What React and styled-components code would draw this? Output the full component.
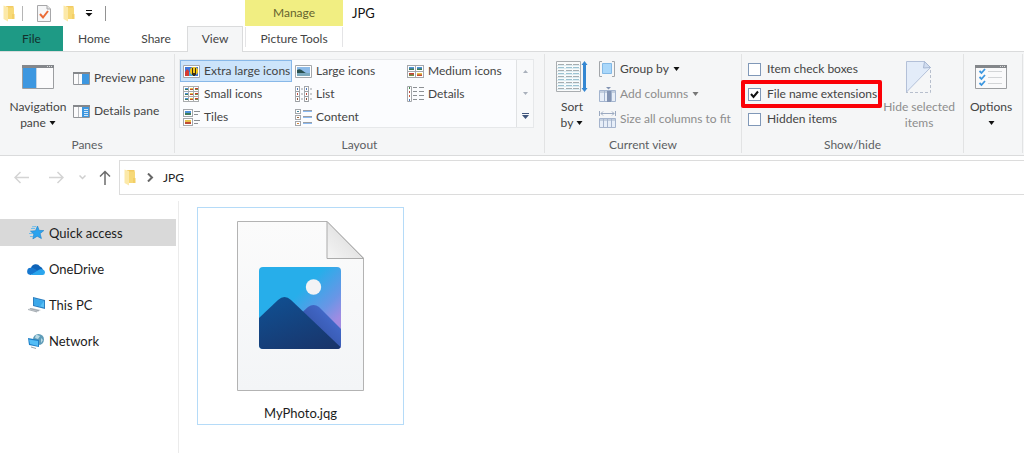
import React from "react";
import styled, { createGlobalStyle, css } from "styled-components";

const GlobalStyle = createGlobalStyle`
  *, *::before, *::after { box-sizing: border-box; }
  body {
    margin: 0;
    background: #fff;
    color: #444;
    font-family: Lato, "Open Sans", sans-serif;
    font-size: 12px;
    line-height: 16px;
  }
  button, input { font: inherit; color: inherit; margin: 0; }
  button { padding: 0; border: 0; background: none; white-space: nowrap; }
  svg { display: block; flex: none; }
`;

const Window = styled.div`
  display: flex;
  flex-direction: column;
  min-height: 100vh;
`;

const Header = styled.header`
  display: flex;
  align-items: stretch;
  height: 52px;
`;

const HeaderStart = styled.div`
  display: flex;
  flex-direction: column;
  width: 245px;
`;

const QuickBar = styled.div`
  display: flex;
  align-items: center;
  height: 26px;
  padding-left: 3px;
`;

const QuickButton = styled.button`
  display: flex;
  margin-right: ${(p) => p.$gap || 0}px;
`;

const Divider = styled.span`
  width: 1px;
  height: 15px;
  margin-right: ${(p) => p.$gap || 0}px;
  background: ${(p) => p.$color || "#b5b5b5"};
`;

const Tabs = styled.nav`
  display: flex;
  height: 26px;
  border-bottom: 1px solid #dadbdc;
`;

const Tab = styled.button`
  width: ${(p) => p.$width}px;
  height: 25px;
  ${(p) => p.$file && css`
    background: #1e9a85;
    color: #12312d;
  `}
  ${(p) => p.$active && css`
    height: 26px;
    padding-bottom: 1px;
    background: #f5f6f7;
    border: 1px solid #dadbdc;
    border-bottom: 0;
  `}
`;

const ContextTab = styled.div`
  display: flex;
  flex-direction: column;
  width: 98px;
  border-bottom: 1px solid #dadbdc;
`;

const ContextTitle = styled.div`
  height: 26px;
  line-height: 26px;
  text-align: center;
  background: #f1ee82;
  color: #66642f;
`;

const ContextButton = styled.button`
  height: 20px;
  margin-top: 1px;
  padding-top: 4px;
  border: 1px solid #e4e4e6;
  border-width: 0 1px;
`;

const Title = styled.h1`
  flex: 1;
  margin: 0;
  padding: 0 9px;
  border-bottom: 1px solid #dadbdc;
  color: #111;
  font-size: 13px;
  font-weight: 400;
  line-height: 26px;
`;

const Ribbon = styled.section`
  display: flex;
  height: 104px;
  padding: 2px 0;
  background: #f5f6f7;
  border-bottom: 1px solid #dadbdc;
`;

const Group = styled.section`
  display: flex;
  flex-direction: column;
  flex: none;
  width: ${(p) => p.$width}px;
  border-right: 1px solid #e2e3e4;
`;

const GroupBody = styled.div`
  display: flex;
  flex: 1;
  padding: ${(p) => p.$pad || "0"};
`;

const GroupName = styled.h2`
  margin: 0;
  height: 16px;
  color: #5c5f63;
  font-size: 12px;
  font-weight: 400;
  line-height: 16px;
  text-align: center;
`;

const BigButton = styled.button`
  display: flex;
  flex-direction: column;
  align-items: center;
  width: ${(p) => p.$width}px;
  height: 82px;
  color: ${(p) => (p.disabled ? "#8d8d8d" : "#444")};
`;

const BigArt = styled.span`
  display: flex;
  align-items: center;
  height: 40px;
  margin: 3px 0 2px;
`;

const Line = styled.span`
  display: flex;
  align-items: center;
  gap: 3px;
  min-height: 16px;
`;

const Stack = styled.div`
  display: flex;
  flex-direction: column;
  align-items: flex-start;
  gap: ${(p) => p.$gap}px;
  padding: ${(p) => p.$pad || "0"};
`;

const SmallButton = styled.button`
  display: flex;
  align-items: center;
  gap: 4px;
  height: 18px;
  color: ${(p) => (p.disabled ? "#8d8d8d" : "#444")};
`;

const Gallery = styled.div`
  display: flex;
  width: 355px;
  height: 69px;
  border: 1px solid #e6e8ea;
  background: #fbfcfe;
`;

const GalleryGrid = styled.div`
  display: grid;
  grid-template-columns: 112px 112px 112px;
  grid-auto-rows: 22px;
  row-gap: 1px;
  flex: 1;
`;

const GalleryItem = styled.button`
  display: flex;
  align-items: center;
  gap: 4px;
  padding-left: 2px;
  border: 1px solid transparent;
  ${(p) => p.$active && css`
    background: #cce4fb;
    border-color: #88b8e8;
  `}
`;

const Scroller = styled.div`
  display: flex;
  flex-direction: column;
  width: 17px;
  border-left: 1px solid #e0e2e4;
`;

const ScrollButton = styled.button`
  display: flex;
  flex: 1;
  align-items: center;
  justify-content: center;
  background: #f8f9fa;
`;

const CheckLabel = styled.label`
  position: relative;
  display: flex;
  align-items: center;
  gap: 6px;
  height: 18px;
  white-space: nowrap;
  ${(p) => p.$marked && css`
    &::after {
      content: "";
      position: absolute;
      inset: -5px -5px -5px -7px;
      border: 4px solid #fb0007;
      border-radius: 2px;
    }
  `}
`;

const CheckBox = styled.input`
  appearance: none;
  width: 13px;
  height: 13px;
  border: 1px solid #8098b8;
  background: #fff;
  &:checked {
    background: #fff url("data:image/svg+xml,%3Csvg xmlns='http://www.w3.org/2000/svg' viewBox='0 0 11 11'%3E%3Cpath d='M2 5l2.5 3L9 2.5' fill='none' stroke='%23111' stroke-width='2'/%3E%3C/svg%3E");
  }
`;

const AddressRow = styled.div`
  display: flex;
  align-items: center;
  height: 35px;
  margin-top: 4px;
`;

const NavButtons = styled.div`
  display: flex;
  align-items: center;
  width: 119px;
  padding-left: 14px;
`;

const NavButton = styled.button`
  margin-right: ${(p) => p.$gap || 0}px;
`;

const Address = styled.div`
  display: flex;
  flex: 1;
  align-items: center;
  gap: 9px;
  height: 35px;
  padding-left: 4px;
  border: 1px solid #dcdcdc;
  border-right: 0;
  color: #222;
`;

const Main = styled.main`
  display: flex;
  flex: 1;
  padding-top: 6px;
`;

const Sidebar = styled.nav`
  display: flex;
  flex-direction: column;
  gap: 9px;
  width: 179px;
  padding: 18px 2px 0 0;
  border-right: 1px solid #ebebeb;
`;

const Place = styled.a`
  display: flex;
  align-items: center;
  gap: 4px;
  height: 27px;
  padding-left: 27px;
  color: #1c1c1c;
  font-size: 13px;
  text-decoration: none;
  background: ${(p) => (p.$active ? "#d9d9d9" : "transparent")};
`;

const Files = styled.section`
  flex: 1;
  padding: 6px 18px;
`;

const FileTile = styled.button`
  display: flex;
  flex-direction: column;
  align-items: center;
  gap: 13px;
  width: 207px;
  height: 218px;
  padding-top: 13px;
  border: 1px solid #b5dbf8;
  color: #1c1c1c;
  font-size: 13px;
`;

const Caret = ({ color = "#111" }) => (
  <svg width="7" height="4" viewBox="0 0 7 4"><path d="M0.500 0h6L3.500 4z" fill={color} /></svg>
);

const Folder = () => (
  <svg width="12" height="17" viewBox="0 0 12 17">
    <path d="M3 1h7.500v13H3z" fill="#f2cb64" />
    <path d="M4.500 2.500H11V14H4.500z" fill="#f7d978" />
    <path d="M0.500 0.500L5 2v14.500L0.500 14z" fill="#fce9a9" />
    <path d="M9 9h2.500v5H9z" fill="#f3cf66" />
  </svg>
);

const PageCheck = () => (
  <svg width="14" height="17" viewBox="0 0 14 17">
    <path d="M.5.5h9.500l3.500 3.500v12.500H.5z" fill="#f7f7f8" stroke="#a7a7a9" />
    <path d="M10 .5v3.500h3.500" fill="#e4e4e4" stroke="#a7a7a9" />
    <path d="M3 9l3 3.500L11 6" fill="none" stroke="#ea6a35" strokeWidth="2" />
  </svg>
);

const Customize = () => (
  <svg width="8" height="7" viewBox="0 0 8 7"><path d="M1 0h6v1H1zM.5 3h7L4 6.500z" fill="#111" /></svg>
);

const NavPaneIcon = () => (
  <svg width="32" height="24" viewBox="0 0 32 24">
    <path d="M.5.5h31v23H.5z" fill="#fbfbfc" stroke="#9c9ea1" />
    <path d="M0 0h32v3H0z" fill="#84878b" />
    <path d="M25 1h1v1h-1zM27 1h1v1h-1zM29 1h1v1h-1z" fill="#d9dadb" />
    <path d="M1 3h13v20H1z" fill="#3d97e0" />
    <path d="M14 3h1v20h-1z" fill="#c4d4e4" />
  </svg>
);

const PaneIcon = ({ details }) => (
  <svg width="17" height="13" viewBox="0 0 17 13">
    <path d="M.5.5h16v12H.5z" fill="#fbfbfc" stroke="#929599" />
    <path d="M0 0h17v2H0z" fill="#84878b" />
    <path d="M5 2h1v10H5z" fill="#b9bcc0" />
    <path d="M9 2h7v10H9z" fill="#3d97e0" />
    {details && <path d="M11 4h4v1h-4zM11 6h4v1h-4zM11 8h4v1h-4zM11 10h4v1h-4z" fill="#cfe6f9" />}
  </svg>
);

const Thumb = ({ x = 0, y = 0, w = 5, h = 4, hue = 0 }) => (
  <g>
    <rect x={x} y={y} width={w} height={h} fill={["#4e91d8", "#e7c14b", "#c94132"][hue]} />
    <rect x={x} y={y + h / 2} width={w} height={h / 2} fill={["#3d7a5a", "#bf4b34", "#6f8e48"][hue]} />
  </g>
);

const GalleryIcon = ({ kind }) => (
  <svg width="17" height="17" viewBox="0 0 17 17">
    {kind === "xl" && (
      <g>
        <path d="M.5 2.500h16v12H.5z" fill="#fff" stroke="#a4a7ab" />
        <path d="M2 4h13v9H2z" fill="#3c75dc" />
        <path d="M2 9l2-3 2 2 1 5H2z" fill="#d43c34" />
        <path d="M6 9h4v4H6z" fill="#4aa7d8" />
        <circle cx="11" cy="8" r="4" fill="#f5c819" />
        <path d="M9 5h1v7H9zM12 5h1v7h-1zM10 10h2v3h-2z" fill="#39301c" />
      </g>
    )}
    {kind === "large" && (
      <g>
        <path d="M.5 2.500h16v12H.5z" fill="#fff" stroke="#a4a7ab" />
        <path d="M2 4h13v9H2z" fill="#8dbbe8" />
        <path d="M2 7q3-2 6 1t7 2v1H2z" fill="#28504f" />
        <path d="M2 10h13v3H2z" fill="#7ba9bd" />
      </g>
    )}
    {kind === "medium" && [0, 1, 2, 3].map((i) => (
      <g key={i}>
        <rect x={(i % 2) * 8 + 0.5} y={Math.floor(i / 2) * 6 + 2.5} width="8" height="6" fill="#fff" stroke="#a4a7ab" />
        <Thumb x={(i % 2) * 8 + 2} y={Math.floor(i / 2) * 6 + 4} w={5} h={3} hue={[0, 0, 2, 1][i]} />
      </g>
    ))}
    {kind === "small" && [0, 1, 2, 3, 4, 5, 6, 7, 8].map((i) => (
      <g key={i}>
        <rect x={(i % 3) * 5 + 0.5} y={Math.floor(i / 3) * 5 + 0.5} width="5" height="5" fill="#fff" stroke="#aaadaf" />
        <Thumb x={(i % 3) * 5 + 2} y={Math.floor(i / 3) * 5 + 2} w={3} h={2} hue={i % 3} />
      </g>
    ))}
    {kind === "list" && [0, 9].map((x) => (
      <g key={x}>
        <rect x={x + 0.5} y=".5" width="4" height="15" fill="#fff" stroke="#a4a7ab" />
        {[2, 7, 12].map((y, i) => (
          <g key={y}>
            <rect x={x + 2} y={y} width="1" height="2" fill={["#4e79bb", "#ba4c3f", "#8a5038"][i]} />
            <path d={`M${x + 1} ${y + 3.5}h3M${x + 6} ${y + 1}h2`} stroke="#999da1" />
          </g>
        ))}
      </g>
    ))}
    {kind === "details" && (
      <g>
        <path d="M.5.5h4v15h-4z" fill="#fff" stroke="#a4a7ab" />
        {[1, 5, 9, 13].map((y, i) => (
          <g key={y}>
            <rect x="2" y={y} width="1" height="2" fill={["#44884f", "#ba4c3f", "#c95a3a", "#4e79bb"][i]} />
            <path d={`M6 ${y + 0.5}h4M12 ${y + 0.5}h5`} stroke="#8c9094" />
          </g>
        ))}
      </g>
    )}
    {kind === "tiles" && [0, 9].map((y, i) => (
      <g key={y}>
        <rect x=".5" y={y + 0.5} width="9" height="7" fill="#fff" stroke="#a4a7ab" />
        <Thumb x={2} y={y + 2} w={6} h={4} hue={i} />
        <path d={`M11 ${y + 2.5}h6M11 ${y + 5.5}h4`} stroke="#8c9094" />
      </g>
    ))}
    {kind === "content" && [0, 6, 12].map((y, i) => (
      <g key={y}>
        <rect x=".5" y={y + 0.5} width="5" height="4" fill="#fff" stroke="#a4a7ab" />
        <Thumb x={2} y={y + 2} w={2} h={1} hue={(i * 2) % 3} />
        <path d={`M8 ${y + 1.5}h9`} stroke="#9a9ea4" />
        <path d={`M8 ${y + 2.5}h9`} stroke="#8bb9f0" />
      </g>
    ))}
  </svg>
);

const SortIcon = () => (
  <svg width="32" height="32" viewBox="0 0 32 32">
    <path d="M.5.5h24v30H.5z" fill="#fafbfb" stroke="#a9adb0" />
    {[3, 6, 9, 12, 15, 18, 21, 24, 27].map((y, i) => (
      <g key={y}>
        <path d={`M1 ${y + 1.5}h23`} stroke="#dcecf2" />
        <path d={`M2 ${y + 0.5}h6M10 ${y + 0.5}h6M17 ${y + 0.5}h6`} stroke={i % 2 ? "#9cc3d2" : "#a7adb0"} />
      </g>
    ))}
    <path d="M28.500 0l3 4h-1.500v23h1.500l-3 4-3-4H27V4h-1.500z" fill="#3487d2" />
  </svg>
);

const GroupIcon = () => (
  <svg width="17" height="16" viewBox="0 0 17 16">
    <path d="M3 .5H.5v15H3M13 .5h2.500v15H13" fill="none" stroke="#a2a6aa" />
    <path d="M3.500 2.500h9v10h-9z" fill="#a9d7fa" stroke="#83b9e6" />
  </svg>
);

const AddColumnIcon = () => (
  <svg width="17" height="17" viewBox="0 0 17 17">
    <path d="M.5 4.500h16v11H.5z" fill="#e7eef8" stroke="#a3b4ce" />
    <path d="M1 5h15v2H1z" fill="#c3cfdf" />
    <path d="M5.500 5v10M12.500 5v10" stroke="#a3b4ce" />
    <path d="M8 5h4v11H8z" fill="#8394b3" />
    <path d="M9.500 3.500L7 1h5z" fill="#8394b3" />
  </svg>
);

const SizeColumnsIcon = () => (
  <svg width="17" height="17" viewBox="0 0 17 17">
    <path d="M.5 0v5M16.500 0v5M2 2.500h13M4 .5l-2 2 2 2M13 .5l2 2-2 2" fill="none" stroke="#9ba9c0" />
    <path d="M.5 7.500h16v9H.5z" fill="#e7eef8" stroke="#a5b4cd" />
    <path d="M1 8h15v2H1z" fill="#c3cfdf" />
    <path d="M4.500 8v8M8.500 8v8M12.500 8v8" stroke="#a5b4cd" />
  </svg>
);

const HideIcon = () => (
  <svg width="26" height="32" viewBox="0 0 26 32">
    <path d="M.5 31V.5h18l6 6z" fill="#e3ecf9" stroke="#b3c0d8" />
    <path d="M18.500.5l-1 6.500 7-.5z" fill="#d0dcef" stroke="#a9b8d2" />
    <path d="M24.500 9v22.500H0" fill="none" stroke="#b7bfcd" strokeDasharray="3 2" />
  </svg>
);

const OptionsIcon = () => (
  <svg width="32" height="24" viewBox="0 0 32 24">
    <path d="M.5.5h31v23H.5z" fill="#fafafb" stroke="#9c9ea1" />
    <path d="M0 0h32v3H0z" fill="#84878b" />
    <path d="M25 1h1v1h-1zM27 1h1v1h-1zM29 1h1v1h-1z" fill="#d9dadb" />
    {[4, 10, 16].map((y) => (
      <g key={y}>
        <path d={`M4.500 ${y + 2}l2 2L10 ${y}`} fill="none" stroke="#3d97e0" strokeWidth="1.800" />
        <path d={`M13 ${y + 2.5}h14`} stroke="#d3d5d7" />
      </g>
    ))}
  </svg>
);

const Arrow = ({ back }) => (
  <svg width="15" height="13" viewBox="0 0 15 13">
    <path d={back ? "M15 6.500H1M6.500 1L1 6.500 6.500 12" : "M0 6.500h14M8.500 1L14 6.500 8.500 12"} fill="none" stroke="#d4d4d4" strokeWidth="1.500" />
  </svg>
);

const PLACE_ICONS = {
  star: (
    <g>
      <path d="M10.500 1l1.600 4.400 4.700.2-3.700 3 1.300 4.900-4.200-2.300-4.300 2.700 1-5L3.500 6.200l5-.5z" fill="#2ba3ee" stroke="#2386cf" strokeWidth=".7" />
      <path d="M4 3.500h4M2 8.500h4M3 11.500h3M5 1.800l4-.3" stroke="#70bdea" />
    </g>
  ),
  cloud: (
    <g>
      <path d="M4 7a5 5 0 0 1 9-1.500A5 5 0 0 1 16 9l-8 3z" fill="#0f64b8" />
      <path d="M3.500 14A3.600 3.600 0 0 1 4 6.800c3 0 5 2 8 4z" fill="#1677cf" />
      <path d="M3.500 14L12 8.700c4-1.400 6 .8 6 2.800a2.700 2.700 0 0 1-3 2.500z" fill="#2ba6ee" />
    </g>
  ),
  pc: (
    <g>
      <path d="M6 0l12 3v9L6 9z" fill="#2d7fc0" />
      <path d="M7 1.500l10 2.500v6.500L7 8z" fill="#58bff5" />
      <path d="M7 1.500l10 2.500-4 5.500L7 8z" fill="#3ba8ea" />
      <path d="M1 12l4-1 9 2-4 2z" fill="#c6cbd0" />
      <path d="M3 11.500l9 2.300M1 12.500l9 2.500" stroke="#8b949b" strokeWidth=".7" />
    </g>
  ),
  network: (
    <g>
      <circle cx="11.500" cy="6.500" r="5.500" fill="#5f9cb8" />
      <path d="M9 1.500l4 1.500-2 3-3-1zM14 5l2 2-2 3z" fill="#b8d9e5" />
      <path d="M1 5l11 2v7L2 12z" fill="#1d7ec6" />
      <path d="M2 6.500l9 1.500v5l-8-2z" fill="#53bdf6" />
      <path d="M4 14l5 1.500" stroke="#9aa6ae" />
    </g>
  ),
};

const PhotoIcon = () => (
  <svg width="128" height="171" viewBox="0 0 128 171">
    <defs>
      <linearGradient id="paper" x1="0" y1="0" x2="0" y2="1">
        <stop offset="0" stopColor="#fbfbfb" /><stop offset="1" stopColor="#f3f5f7" />
      </linearGradient>
      <linearGradient id="fold" x1="0" y1="1" x2="1" y2="0">
        <stop offset="0" stopColor="#f5f5f5" /><stop offset="1" stopColor="#d5d5d5" />
      </linearGradient>
      <linearGradient id="sky" x1="0" y1="0" x2="1" y2="1">
        <stop offset=".4" stopColor="#27aeea" /><stop offset=".65" stopColor="#6896e6" /><stop offset=".8" stopColor="#a18be2" />
      </linearGradient>
      <linearGradient id="front" x1=".2" y1="0" x2=".8" y2="1">
        <stop offset="0" stopColor="#104f91" /><stop offset="1" stopColor="#19356b" />
      </linearGradient>
      <linearGradient id="rear" x1="1" y1="0" x2=".3" y2=".7">
        <stop offset=".3" stopColor="#436bcc" /><stop offset="1" stopColor="#3451a5" />
      </linearGradient>
      <clipPath id="photo"><rect x="22" y="46" width="82" height="82" rx="4" /></clipPath>
    </defs>
    <path d="M.5.5h89.500L126.500 37v132.500H.5z" fill="url(#paper)" stroke="#b3b3b3" />
    <path d="M90 .5V37.500h36.500z" fill="url(#fold)" stroke="#ababab" />
    <g clipPath="url(#photo)">
      <path d="M22 46h82v82H22z" fill="url(#sky)" />
      <circle cx="76.500" cy="66" r="7.700" fill="#f3f3f5" />
      <path d="M60 96l11-10q5.500-4 11 0l24 24v20H80z" fill="url(#rear)" />
      <path d="M20 99l21-20q6.500-6 13 0l50 47.500v3H20z" fill="url(#front)" />
    </g>
  </svg>
);

const VIEWS = [
  ["xl", "Extra large icons"], ["large", "Large icons"], ["medium", "Medium icons"],
  ["small", "Small icons"], ["list", "List"], ["details", "Details"],
  ["tiles", "Tiles"], ["content", "Content"],
];

const PLACES = [
  ["star", "Quick access"], ["cloud", "OneDrive"], ["pc", "This PC"], ["network", "Network"],
];

export default function App() {
  return (
    <Window>
      <GlobalStyle />
      <Header>
        <HeaderStart>
          <QuickBar>
            <QuickButton $gap={7} aria-label="Folder"><Folder /></QuickButton>
            <Divider $gap={14} />
            <QuickButton $gap={12} aria-label="Properties"><PageCheck /></QuickButton>
            <QuickButton $gap={10} aria-label="New folder"><Folder /></QuickButton>
            <QuickButton $gap={12} aria-label="Customize toolbar"><Customize /></QuickButton>
            <Divider $color="#929292" />
          </QuickBar>
          <Tabs>
            <Tab $file $width={63}>File</Tab>
            <Tab $width={62}>Home</Tab>
            <Tab $width={62}>Share</Tab>
            <Tab $active $width={56}>View</Tab>
          </Tabs>
        </HeaderStart>
        <ContextTab>
          <ContextTitle>Manage</ContextTitle>
          <ContextButton>Picture Tools</ContextButton>
        </ContextTab>
        <Title>JPG</Title>
      </Header>

      <Ribbon>
        <Group $width={175}>
          <GroupBody $pad="0 0 0 3px">
            <BigButton $width={70}>
              <BigArt><NavPaneIcon /></BigArt>
              <span>Navigation</span>
              <Line>pane <Caret /></Line>
            </BigButton>
            <Stack $gap={15} $pad="15px 0 0">
              <SmallButton><PaneIcon />Preview pane</SmallButton>
              <SmallButton><PaneIcon details />Details pane</SmallButton>
            </Stack>
          </GroupBody>
          <GroupName>Panes</GroupName>
        </Group>

        <Group $width={370}>
          <GroupBody $pad="5px 0 0 4px">
            <Gallery>
              <GalleryGrid>
                {VIEWS.map(([kind, name]) => (
                  <GalleryItem key={kind} $active={kind === "xl"}><GalleryIcon kind={kind} />{name}</GalleryItem>
                ))}
              </GalleryGrid>
              <Scroller>
                <ScrollButton aria-label="Scroll up"><svg width="5" height="3" viewBox="0 0 5 3"><path d="M0 3h5L2.500 0z" fill="#a9b0bb" /></svg></ScrollButton>
                <ScrollButton aria-label="Scroll down"><svg width="5" height="3" viewBox="0 0 5 3"><path d="M0 0h5L2.500 3z" fill="#a9b0bb" /></svg></ScrollButton>
                <ScrollButton aria-label="More"><svg width="7" height="6" viewBox="0 0 7 6"><path d="M0 0h7v1H0zM0 2h7L3.500 6z" fill="#40567c" /></svg></ScrollButton>
              </Scroller>
            </Gallery>
          </GroupBody>
          <GroupName>Layout</GroupName>
        </Group>

        <Group $width={197}>
          <GroupBody>
            <BigButton $width={54}>
              <BigArt><SortIcon /></BigArt>
              <span>Sort</span>
              <Line>by <Caret /></Line>
            </BigButton>
            <Stack $gap={7} $pad="6px 0 0">
              <SmallButton><GroupIcon />Group by <Caret /></SmallButton>
              <SmallButton disabled><AddColumnIcon />Add columns <Caret color="#777" /></SmallButton>
              <SmallButton disabled><SizeColumnsIcon />Size all columns to fit</SmallButton>
            </Stack>
          </GroupBody>
          <GroupName>Current view</GroupName>
        </Group>

        <Group $width={222}>
          <GroupBody>
            <Stack $gap={7} $pad="6px 0 0 6px">
              <CheckLabel><CheckBox type="checkbox" />Item check boxes</CheckLabel>
              <CheckLabel $marked><CheckBox type="checkbox" defaultChecked />File name extensions</CheckLabel>
              <CheckLabel><CheckBox type="checkbox" />Hidden items</CheckLabel>
            </Stack>
            <BigButton $width={84} disabled>
              <BigArt><HideIcon /></BigArt>
              <span>Hide selected</span>
              <span>items</span>
            </BigButton>
          </GroupBody>
          <GroupName>Show/hide</GroupName>
        </Group>

        <Group $width={59}>
          <GroupBody>
            <BigButton $width={54}>
              <BigArt><OptionsIcon /></BigArt>
              <span>Options</span>
              <Line><Caret /></Line>
            </BigButton>
          </GroupBody>
        </Group>
      </Ribbon>

      <AddressRow>
        <NavButtons>
          <NavButton $gap={20} aria-label="Back"><Arrow back /></NavButton>
          <NavButton $gap={15} aria-label="Forward"><Arrow /></NavButton>
          <NavButton $gap={13} aria-label="Recent"><svg width="7" height="5" viewBox="0 0 7 5"><path d="M.5.5l3 3 3-3" fill="none" stroke="#cfcfcf" strokeWidth="1.500" /></svg></NavButton>
          <NavButton aria-label="Up"><svg width="12" height="15" viewBox="0 0 12 15"><path d="M6 15V1.500M1 6.500l5-5 5 5" fill="none" stroke="#6c6c6c" strokeWidth="1.500" /></svg></NavButton>
        </NavButtons>
        <Address>
          <Folder />
          <svg width="9" height="9" viewBox="0 0 9 9"><path d="M3 .5l4 4-4 4" fill="none" stroke="#666" strokeWidth="2" /></svg>
          <span>JPG</span>
        </Address>
      </AddressRow>

      <Main>
        <Sidebar>
          {PLACES.map(([icon, name]) => (
            <Place key={icon} href="#" $active={icon === "star"}>
              <svg width="18" height="16" viewBox="0 0 18 16">{PLACE_ICONS[icon]}</svg>
              {name}
            </Place>
          ))}
        </Sidebar>
        <Files>
          <FileTile>
            <PhotoIcon />
            <span>MyPhoto.jqg</span>
          </FileTile>
        </Files>
      </Main>
    </Window>
  );
}
